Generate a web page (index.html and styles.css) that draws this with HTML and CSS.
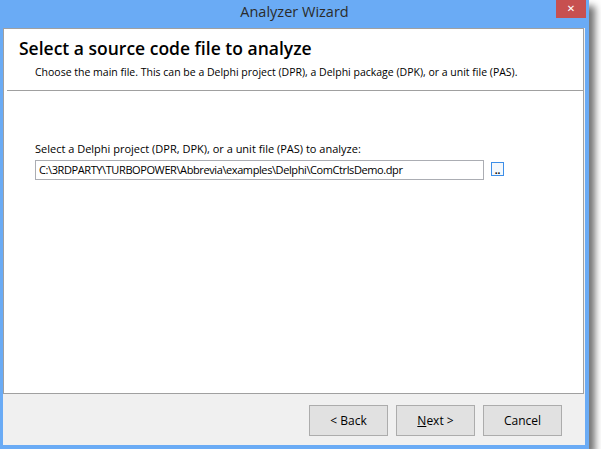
FILE: index.html
```html
<!DOCTYPE html>
<html>
<head>
<meta charset="utf-8">
<title>Analyzer Wizard</title>
<link rel="stylesheet" href="styles.css">
</head>
<body>
<div class="window">
  <div class="titlebar">
    <span class="spacer"></span>
    <span class="title">Analyzer Wizard</span>
    <span class="close">&#x2715;</span>
  </div>
  <div class="client">
    <div class="panel">
      <div class="header">
        <div class="heading">Select a source code file to analyze</div>
        <div class="subtitle">Choose the main file. This can be a Delphi project (DPR), a Delphi package (DPK), or a unit file (PAS).</div>
      </div>
      <div class="separator"></div>
      <div class="body">
        <div class="label">Select a Delphi project (DPR, DPK), or a unit file (PAS) to analyze:</div>
        <div class="row">
          <div class="input">C:\3RDPARTY\TURBOPOWER\Abbrevia\examples\Delphi\ComCtrlsDemo.dpr</div>
          <div class="browse">..</div>
        </div>
      </div>
    </div>
    <div class="buttons">
      <div class="btn">&lt; Back</div>
      <div class="btn"><u>N</u>ext &gt;</div>
      <div class="btn">Cancel</div>
    </div>
  </div>
</div>
</body>
</html>
```

FILE: styles.css
```css
html, body {
  margin: 0;
  padding: 0;
  background: #ffffff;
}
body {
  font-family: "Open Sans", "Noto Sans", sans-serif;
  color: #000;
}
.window {
  width: 589px;
  height: 449px;
  box-sizing: border-box;
  background: #6aabf5;
  box-shadow: 6px 6px 7px rgba(0, 0, 0, 0.55);
  display: flex;
  flex-direction: column;
}
.titlebar {
  height: 28px;
  display: grid;
  grid-template-columns: 1fr auto 1fr;
}
.title {
  font-size: 14.5px;
  line-height: 23px;
  color: #2b2b2b;
}
.close {
  justify-self: end;
  align-self: start;
  width: 30px;
  height: 18px;
  margin-right: 3px;
  background: #c75050;
  color: #fff;
  font-size: 10px;
  font-weight: bold;
  line-height: 18px;
  text-align: center;
  font-family: "DejaVu Sans", sans-serif;
}
.client {
  flex: 1;
  margin: 0 4px 4px 3px;
  background: #f0f0f0;
  display: flex;
  flex-direction: column;
}
.panel {
  flex: 1;
  margin-right: 1px;
  background: #fff;
  border: 1px solid #a0a0a0;
  display: flex;
  flex-direction: column;
}
.header {
  height: 61px;
  box-sizing: border-box;
  padding: 7px 0 0 15px;
}
.heading {
  font-size: 17.5px;
  font-weight: 600;
  line-height: 24px;
}
.subtitle {
  font-size: 10.5px;
  line-height: 15px;
  margin: 5px 0 0 16px;
}
.separator {
  height: 1px;
  margin-left: 3px;
  background: #a0a0a0;
}
.body {
  padding: 50px 0 0 31px;
}
.label {
  font-size: 11px;
  line-height: 15px;
}
.row {
  display: flex;
  align-items: flex-start;
  gap: 7px;
  margin-top: 4px;
}
.input {
  width: 449px;
  height: 20px;
  box-sizing: border-box;
  border: 1px solid #abadb3;
  padding-left: 3px;
  font-size: 11px;
  letter-spacing: -0.4px;
  line-height: 18px;
  white-space: nowrap;
  overflow: hidden;
}
.browse {
  width: 13px;
  height: 14px;
  margin-top: 2px;
  box-sizing: border-box;
  border: 1px solid #3c8ee8;
  background: #f4f8fc;
  font-size: 10px;
  line-height: 14px;
  text-align: center;
  font-weight: bold;
}
.buttons {
  height: 51px;
  box-sizing: border-box;
  padding: 11px 23px 0 0;
  display: flex;
  justify-content: flex-end;
  gap: 8px;
}
.btn {
  width: 79px;
  height: 31px;
  box-sizing: border-box;
  border: 1px solid #acacac;
  background: #e1e1e1;
  font-size: 12px;
  line-height: 29px;
  text-align: center;
}
```
